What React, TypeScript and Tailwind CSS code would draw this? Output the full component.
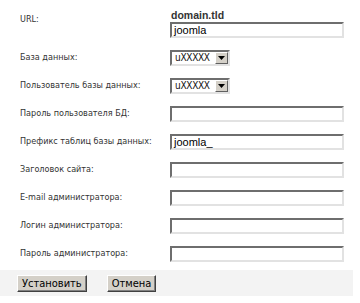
const inputCls =
    "h-[16px] w-[174px] bg-white border-2 border-t-[#6e6e6e] border-l-[#6e6e6e] border-b-[#e2e2e2] border-r-[#e2e2e2] px-[2px] text-[11px] leading-[11px] text-black flex items-center";

const condensed = { fontFamily: '"DejaVu Sans Condensed", "Liberation Sans", sans-serif' };
const arial = { fontFamily: '"Liberation Sans", sans-serif' };

const rows = [
    { label: "База данных:", kind: "select", value: "uXXXXX" },
    { label: "Пользователь базы данных:", kind: "select", value: "uXXXXX" },
    { label: "Пароль пользователя БД:", kind: "input", value: "" },
    { label: "Префикс таблиц базы данных:", kind: "input", value: "joomla_" },
    { label: "Заголовок сайта:", kind: "input", value: "" },
    { label: "E-mail администратора:", kind: "input", value: "" },
    { label: "Логин администратора:", kind: "input", value: "" },
    { label: "Пароль администратора:", kind: "input", value: "" },
];

function FakeSelect({ value }: { value: string }) {
    return (
        <div className="h-[16px] w-[60px] bg-white border-2 border-t-[#6e6e6e] border-l-[#6e6e6e] border-b-[#e2e2e2] border-r-[#e2e2e2] flex items-center justify-between">
            <span
                className="pl-[3px] text-[10px] leading-[10px] text-[#111] tracking-[-0.3px]"
                style={condensed}
            >
                {value}
            </span>
            <span className="h-[12px] w-[13px] bg-[#d4d0c8] border border-t-white border-l-white border-b-[#606060] border-r-[#606060] flex items-center justify-center">
                <svg width="7" height="4" viewBox="0 0 7 4">
                    <path d="M0 0h7L3.5 4z" fill="#000" />
                </svg>
            </span>
        </div>
    );
}

function Btn({ children }: { children: string }) {
    return (
        <button
            className="h-[17px] bg-[#d4d0c8] border border-t-white border-l-white border-b-[#404040] border-r-[#404040] shadow-[inset_-1px_-1px_0_#808080] px-[4px] text-[11px] leading-[11px] text-black"
            style={condensed}
        >
            {children}
        </button>
    );
}

export default function App() {
    return (
        <div
            className="w-[360px] h-[303px] bg-white text-[#333] text-[9px] whitespace-nowrap"
            style={condensed}
        >
            <div className="flex h-[44px]">
                <div className="w-[170px] pl-[20px] pt-[13px]">URL:</div>
                <div className="pt-[9px]">
                    <div
                        className="pl-[1px] h-[13px] leading-[13px] text-[10.5px] font-bold text-[#333]"
                        style={arial}
                    >
                        domain.tld
                    </div>
                    <div className={inputCls} style={arial}>
                        joomla
                    </div>
                </div>
            </div>

            {rows.map((r) => (
                <div key={r.label} className="flex items-center h-[28px]">
                    <div className="w-[170px] pl-[20px]">{r.label}</div>
                    {r.kind === "select" ? (
                        <FakeSelect value={r.value} />
                    ) : (
                        <div className={inputCls} style={arial}>
                            {r.value}
                        </div>
                    )}
                </div>
            ))}

            <div className="mt-[2px] w-[353px] h-[26px] bg-[#f3f3f3] flex items-center gap-[20px] pl-[17px]">
                <Btn>Установить</Btn>
                <Btn>Отмена</Btn>
            </div>
        </div>
    );
}
